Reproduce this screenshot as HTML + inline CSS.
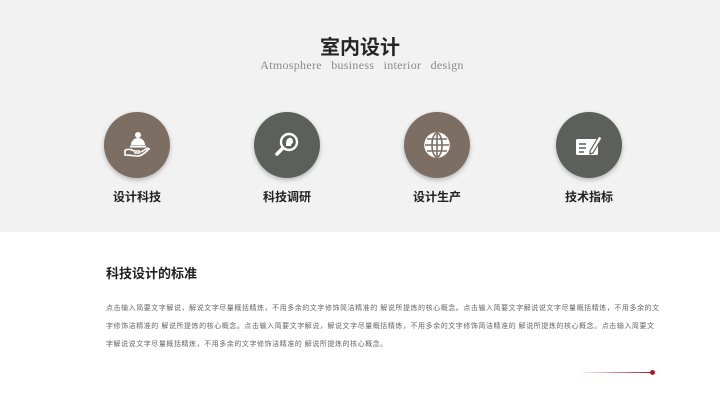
<!DOCTYPE html>
<html><head><meta charset="utf-8"><style>
*{margin:0;padding:0;box-sizing:border-box}
body{width:720px;height:405px;overflow:hidden;background:#fff;font-family:"Liberation Sans","Noto Sans CJK SC",sans-serif;position:relative}
.top{position:absolute;left:0;top:0;width:720px;height:232px;background:#f2f2f2}
.t1{position:absolute;left:0;width:720px;top:31px;text-align:center;font-size:20px;font-weight:bold;color:#262626}
.t2{position:absolute;left:2px;width:720px;top:58px;text-align:center;font-family:"Liberation Serif",serif;font-size:12px;color:#8a8a8a;word-spacing:6px;letter-spacing:0.3px}
.c{position:absolute;width:66px;height:66px;border-radius:50%;top:112px;box-shadow:0 2px 5px rgba(0,0,0,.25);display:flex;align-items:center;justify-content:center}
.b{background:#7d6e64}.g{background:#5c5f5a}
.l{position:absolute;top:188px;width:100px;text-align:center;font-size:12px;font-weight:bold;color:#222}
.h{position:absolute;left:106px;top:263px;font-size:13px;font-weight:bold;color:#222}
.p{position:absolute;left:106px;top:300px;width:554px;font-size:7px;line-height:18px;color:#666;letter-spacing:0.55px}
.line{position:absolute;left:578px;top:372px;width:74px;height:1px;background:linear-gradient(90deg,rgba(160,30,40,0),#a0202a)}
.dot{position:absolute;left:650px;top:370px;width:5px;height:5px;border-radius:50%;background:#a0202a}
</style></head><body>
<div class="top"></div>
<div class="t1">室内设计</div>
<div class="t2">Atmosphere business interior design</div>

<div class="c b" style="left:104px"><svg width="30" height="30" viewBox="0 0 30 30" fill="#fff"><circle cx="16" cy="5" r="3"/><path d="M9 15a7 7 0 0 1 14 0z"/><rect x="8" y="15.5" width="16" height="2"/><path d="M3 20c3-1 6-1 9 1h5c1 0 1 2 0 2h-5M3 20v5c4 0 9 1 13 1 3 0 8-4 11-7-1-1-2-1-3 0l-5 3" stroke="#fff" stroke-width="1.6" fill="none"/></svg></div>
<div class="c g" style="left:254px"><svg width="30" height="30" viewBox="0 0 30 30"><circle cx="17" cy="12" r="8" stroke="#fff" stroke-width="2.4" fill="none"/><path d="M14 16c0-3 0-7 3-8s4 2 4 4-2 1-2 4z" fill="#fff"/><path d="M11 18l-6 6" stroke="#fff" stroke-width="3.5" stroke-linecap="round"/></svg></div>
<div class="c b" style="left:404px"><svg width="30" height="30" viewBox="0 0 30 30" fill="none" stroke="#fff" stroke-width="1.6"><circle cx="15" cy="15" r="12" fill="#fff"/><g stroke="#7d6e64"><ellipse cx="15" cy="15" rx="5" ry="12"/><line x1="15" y1="3" x2="15" y2="27"/><line x1="3" y1="15" x2="27" y2="15"/><line x1="5" y1="9" x2="25" y2="9"/><line x1="5" y1="21" x2="25" y2="21"/></g></svg></div>
<div class="c g" style="left:556px"><svg width="32" height="32" viewBox="0 0 32 32"><rect x="3" y="10" width="22" height="16" rx="1.5" fill="#fff"/><g stroke="#5c5f5a" stroke-width="1.5"><line x1="6" y1="15" x2="13" y2="15"/><line x1="6" y1="19" x2="13" y2="19"/><line x1="6" y1="23" x2="11" y2="23"/></g><path d="M17 22l9-15 3 2-9 15-3 1z" fill="#fff" stroke="#5c5f5a" stroke-width="1.2"/></svg></div>

<div class="l" style="left:87px">设计科技</div>
<div class="l" style="left:237px">科技调研</div>
<div class="l" style="left:387px">设计生产</div>
<div class="l" style="left:539px">技术指标</div>

<div class="h">科技设计的标准</div>
<div class="p">点击输入简要文字解说，解说文字尽量概括精炼，不用多余的文字修饰简洁精准的 解说所提炼的核心概念。点击输入简要文字解说说文字尽量概括精炼，不用多余的文字修饰洁精准的 解说所提炼的核心概念。点击输入简要文字解说，解说文字尽量概括精炼，不用多余的文字修饰简洁精准的 解说所提炼的核心概念。点击输入简要文字解说说文字尽量概括精炼，不用多余的文字修饰洁精准的 解说所提炼的核心概念。</div>
<div class="line"></div><div class="dot"></div>
</body></html>
